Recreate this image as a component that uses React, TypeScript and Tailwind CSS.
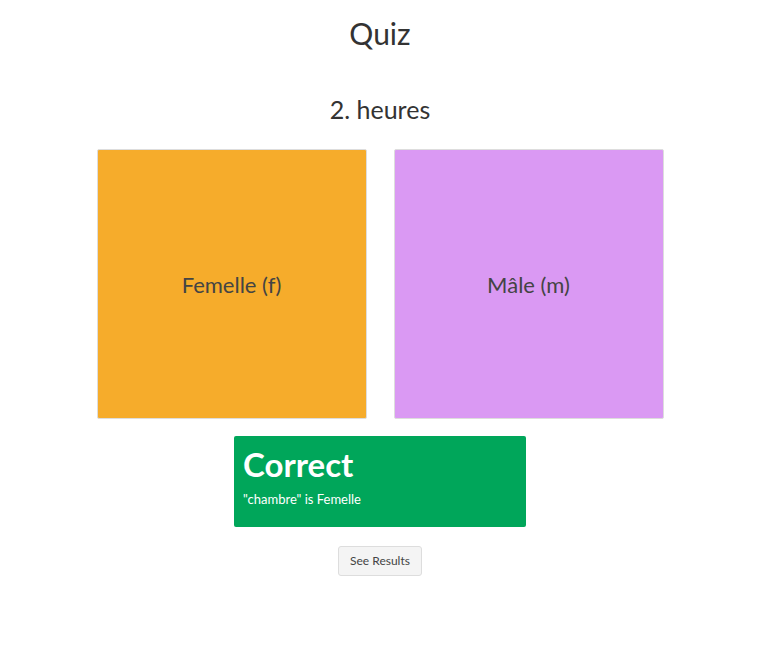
export default function App() {
  return (
    <main className="min-h-screen bg-white font-['Lato',sans-serif] text-[#333]">
      <div className="w-[760px] flex flex-col items-center">
        <h1 className="mt-[13px] text-[30px] leading-[40px]">Quiz</h1>
        <h2 className="mt-[40px] text-[25px] leading-[32px]">2. heures</h2>
        <div className="mt-[24px] flex gap-[27px]">
          <button className="w-[270px] h-[270px] rounded-[2px] border border-[#ddd] bg-[#f6ac2b] text-[22px] text-[#444] flex items-center justify-center">
            Femelle (f)
          </button>
          <button className="w-[270px] h-[270px] rounded-[2px] border border-[#ddd] bg-[#da99f3] text-[22px] text-[#444] flex items-center justify-center">
            Mâle (m)
          </button>
        </div>
        <div className="mt-[17px] w-[292px] h-[91px] rounded-[2px] bg-[#00a65a] text-white px-[9px] pt-[8px]">
          <h3 className="text-[33px] leading-[40px] font-bold">Correct</h3>
          <p className="mt-[7px] text-[13px] leading-[16px]">"chambre" is Femelle</p>
        </div>
        <button className="mt-[19px] w-[84px] h-[30px] rounded-[3px] border border-[#ddd] bg-[#f4f4f4] text-[12px] text-[#444]">
          See Results
        </button>
      </div>
    </main>
  );
}
